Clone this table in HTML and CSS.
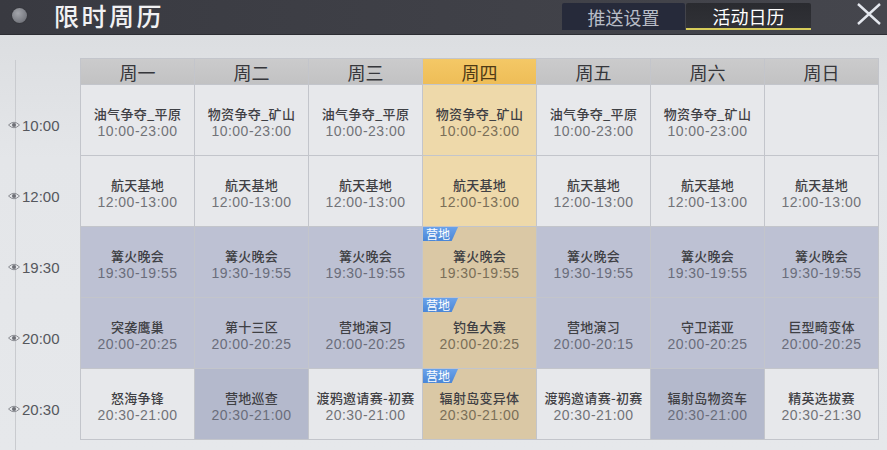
FILE: index.html
```html
<!DOCTYPE html>
<html lang="zh-CN">
<head>
<meta charset="utf-8">
<title>限时周历</title>
<link rel="stylesheet" href="styles.css">
</head>
<body>
<div class="screen">
  <header class="topbar">
    <span class="dot"></span>
    <h1 class="title">限时周历</h1>
    <nav class="tabs">
      <span class="tab">推送设置</span>
      <span class="tab active">活动日历</span>
    </nav>
    <span class="close">
      <svg width="26" height="22" viewBox="0 0 26 22"><path d="M2 1 L24 21 M24 1 L2 21" stroke="#e4e7ee" stroke-width="2.4" fill="none"/></svg>
    </span>
  </header>
  <main class="content">
    <div class="times">
      <div class="slot"><svg class="eye" width="12" height="8" viewBox="0 0 12 8"><path d="M0.5 4 Q6 -1.5 11.5 4 Q6 9.5 0.5 4Z" fill="none" stroke="#8a8c92" stroke-width="1"/><circle cx="6" cy="4" r="2" fill="#6e7076"/></svg><span>10:00</span></div>
      <div class="slot"><svg class="eye" width="12" height="8" viewBox="0 0 12 8"><path d="M0.5 4 Q6 -1.5 11.5 4 Q6 9.5 0.5 4Z" fill="none" stroke="#8a8c92" stroke-width="1"/><circle cx="6" cy="4" r="2" fill="#6e7076"/></svg><span>12:00</span></div>
      <div class="slot"><svg class="eye" width="12" height="8" viewBox="0 0 12 8"><path d="M0.5 4 Q6 -1.5 11.5 4 Q6 9.5 0.5 4Z" fill="none" stroke="#8a8c92" stroke-width="1"/><circle cx="6" cy="4" r="2" fill="#6e7076"/></svg><span>19:30</span></div>
      <div class="slot"><svg class="eye" width="12" height="8" viewBox="0 0 12 8"><path d="M0.5 4 Q6 -1.5 11.5 4 Q6 9.5 0.5 4Z" fill="none" stroke="#8a8c92" stroke-width="1"/><circle cx="6" cy="4" r="2" fill="#6e7076"/></svg><span>20:00</span></div>
      <div class="slot"><svg class="eye" width="12" height="8" viewBox="0 0 12 8"><path d="M0.5 4 Q6 -1.5 11.5 4 Q6 9.5 0.5 4Z" fill="none" stroke="#8a8c92" stroke-width="1"/><circle cx="6" cy="4" r="2" fill="#6e7076"/></svg><span>20:30</span></div>
    </div>
    <div class="table">
      <div class="head">周一</div>
      <div class="head">周二</div>
      <div class="head">周三</div>
      <div class="head today">周四</div>
      <div class="head">周五</div>
      <div class="head">周六</div>
      <div class="head">周日</div>

      <div class="cell"><b>油气争夺_平原</b><i>10:00-23:00</i></div>
      <div class="cell"><b>物资争夺_矿山</b><i>10:00-23:00</i></div>
      <div class="cell"><b>油气争夺_平原</b><i>10:00-23:00</i></div>
      <div class="cell today"><b>物资争夺_矿山</b><i>10:00-23:00</i></div>
      <div class="cell"><b>油气争夺_平原</b><i>10:00-23:00</i></div>
      <div class="cell"><b>物资争夺_矿山</b><i>10:00-23:00</i></div>
      <div class="cell"></div>

      <div class="cell"><b>航天基地</b><i>12:00-13:00</i></div>
      <div class="cell"><b>航天基地</b><i>12:00-13:00</i></div>
      <div class="cell"><b>航天基地</b><i>12:00-13:00</i></div>
      <div class="cell today"><b>航天基地</b><i>12:00-13:00</i></div>
      <div class="cell"><b>航天基地</b><i>12:00-13:00</i></div>
      <div class="cell"><b>航天基地</b><i>12:00-13:00</i></div>
      <div class="cell"><b>航天基地</b><i>12:00-13:00</i></div>

      <div class="cell blue"><b>篝火晚会</b><i>19:30-19:55</i></div>
      <div class="cell blue"><b>篝火晚会</b><i>19:30-19:55</i></div>
      <div class="cell blue"><b>篝火晚会</b><i>19:30-19:55</i></div>
      <div class="cell today dim"><span class="badge">营地</span><b>篝火晚会</b><i>19:30-19:55</i></div>
      <div class="cell blue"><b>篝火晚会</b><i>19:30-19:55</i></div>
      <div class="cell blue"><b>篝火晚会</b><i>19:30-19:55</i></div>
      <div class="cell blue"><b>篝火晚会</b><i>19:30-19:55</i></div>

      <div class="cell blue"><b>突袭鹰巢</b><i>20:00-20:25</i></div>
      <div class="cell blue"><b>第十三区</b><i>20:00-20:25</i></div>
      <div class="cell blue"><b>营地演习</b><i>20:00-20:25</i></div>
      <div class="cell today dim"><span class="badge">营地</span><b>钓鱼大赛</b><i>20:00-20:25</i></div>
      <div class="cell blue"><b>营地演习</b><i>20:00-20:15</i></div>
      <div class="cell blue"><b>守卫诺亚</b><i>20:00-20:25</i></div>
      <div class="cell blue"><b>巨型畸变体</b><i>20:00-20:25</i></div>

      <div class="cell"><b>怒海争锋</b><i>20:30-21:00</i></div>
      <div class="cell blue deep"><b>营地巡查</b><i>20:30-21:00</i></div>
      <div class="cell"><b>渡鸦邀请赛-初赛</b><i>20:30-21:00</i></div>
      <div class="cell today dim"><span class="badge">营地</span><b>辐射岛变异体</b><i>20:30-21:00</i></div>
      <div class="cell"><b>渡鸦邀请赛-初赛</b><i>20:30-21:00</i></div>
      <div class="cell blue deep"><b>辐射岛物资车</b><i>20:30-21:00</i></div>
      <div class="cell"><b>精英选拔赛</b><i>20:30-21:30</i></div>
    </div>
  </main>
</div>
</body>
</html>
```

FILE: styles.css
```css
* { box-sizing: border-box; margin: 0; padding: 0; }

html, body {
  width: 887px;
  height: 450px;
  overflow: hidden;
}

body {
  font-family: "Noto Sans CJK SC", "Liberation Sans", sans-serif;
  background: #e3e5e8;
}

.screen {
  width: 887px;
  height: 450px;
  display: flex;
  flex-direction: column;
}

/* top bar */
.topbar {
  height: 35px;
  flex: none;
  display: flex;
  align-items: flex-start;
  background: linear-gradient(90deg, #393a41 0%, #3f4047 50%, #45464d 100%);
  border-bottom: 1px solid #2c2d33;
}

.dot {
  width: 15px;
  height: 15px;
  margin: 8px 0 0 12px;
  border-radius: 50%;
  background: radial-gradient(circle at 40% 35%, #a3a5ab 0%, #7d7f86 60%, #5e6067 100%);
  box-shadow: 0 0 1px #222;
}

.title {
  margin: 0 0 0 27px;
  height: 34px;
  font-size: 25px;
  line-height: 30px;
  font-weight: 500;
  letter-spacing: 2.5px;
  color: #f1f1f3;
}

.tabs {
  margin: 3px 0 0 auto;
  display: flex;
  gap: 1px;
}

.tab {
  width: 123px;
  height: 27px;
  display: flex;
  align-items: center;
  justify-content: center;
  font-size: 18px;
  color: #b9bdc7;
  background: #262a3a;
  border-radius: 2px 2px 0 0;
}

.tab.active {
  width: 125px;
  color: #ffffff;
  background: linear-gradient(180deg, #2a2b30 0%, #303136 100%);
  border-bottom: 2px solid #d6cc5a;
}

.close {
  margin: 3px 5px 0 45px;
  width: 26px;
  height: 22px;
  display: flex;
}

/* content */
.content {
  flex: 1;
  display: flex;
  padding-top: 23px;
  background: linear-gradient(180deg, #dcdee1 0%, #e4e6e9 30%, #e6e8eb 100%);
}

.times {
  position: relative;
  width: 80px;
  flex: none;
  padding-top: 27px;
  display: flex;
  flex-direction: column;
}

.times::before {
  content: "";
  position: absolute;
  left: 15px;
  top: 2px;
  bottom: 0;
  width: 1px;
  background: #c9cbcf;
}

.slot {
  position: relative;
  height: 71px;
  padding: 9px 0 0 8px;
  display: flex;
  align-items: center;
  gap: 2px;
  font-family: "Liberation Sans", sans-serif;
  font-size: 15px;
  color: #55575d;
}

.eye {
  flex: none;
}

.table {
  width: 799px;
  align-self: flex-start;
  display: grid;
  grid-template-columns: repeat(7, 113px);
  grid-template-rows: 25px repeat(5, 70px);
  gap: 1px;
  background: #c3c5cb;
  border: 1px solid #c3c5cb;
}

.head {
  display: flex;
  align-items: center;
  justify-content: center;
  font-size: 18px;
  color: #36373b;
  background: linear-gradient(180deg, #cbcbcc 0%, #c2c2c3 100%);
}

.head.today {
  color: #4e3a16;
  background: linear-gradient(180deg, #f4c866 0%, #eebd57 100%);
}

.cell {
  position: relative;
  padding-top: 20px;
  text-align: center;
  background: #e7e8eb;
}

.cell b {
  display: block;
  font-size: 13px;
  line-height: 17px;
  letter-spacing: 0.3px;
  font-weight: 500;
  color: #3f4044;
  white-space: nowrap;
}

.cell i {
  display: block;
  font-style: normal;
  font-family: "Liberation Sans", sans-serif;
  font-size: 14px;
  line-height: 18px;
  letter-spacing: 0.5px;
  color: #727378;
}

.cell.blue {
  background: #bdc1d3;
}

.cell.blue i {
  color: #6a6d7b;
}

.cell.deep {
  background: #b4b9cc;
}

.cell.today {
  background: #eed9aa;
}

.cell.today i {
  color: #7b6f58;
}

.cell.today.dim {
  background: #dac8a5;
}

.badge {
  position: absolute;
  left: 0;
  top: 0;
  width: 35px;
  height: 14px;
  padding-right: 5px;
  font-size: 12px;
  line-height: 14px;
  color: #ffffff;
  background: linear-gradient(180deg, #6aa2ea 0%, #4a86d6 100%);
  clip-path: polygon(0 0, 100% 0, 82% 100%, 0 100%);
}
```
